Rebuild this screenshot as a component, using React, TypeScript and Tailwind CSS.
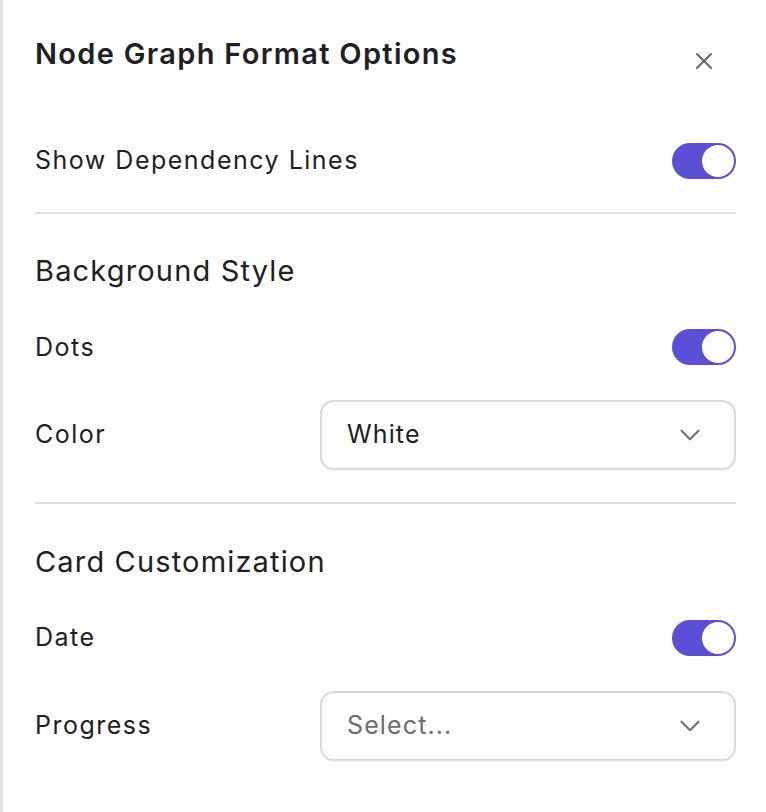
import { X, ChevronDown } from "lucide-react";

const Toggle = ({ on = true }: { on?: boolean }) => (
  <button
    className={`flex h-[36px] w-[64px] shrink-0 items-center rounded-full p-[2px] ${
      on ? "justify-end bg-[#5a4fd5]" : "justify-start bg-[#d4d4d8]"
    }`}
  >
    <span className="block size-[32px] rounded-full bg-white" />
  </button>
);

const SelectBox = ({ value, placeholder }: { value?: string; placeholder?: string }) => (
  <div className="flex h-[70px] w-[416px] items-center justify-between rounded-[14px] border-2 border-[#d9d9de] bg-white pl-[25px] pr-[27px] shadow-[0_1px_2px_rgba(0,0,0,0.06)]">
    <span className={`text-[25px] tracking-[0.045em] ${value ? "text-[#1f2023]" : "text-[#6b6b72]"}`}>
      {value || placeholder}
    </span>
    <ChevronDown className="size-[34px] text-[#737378]" strokeWidth={1.6} />
  </div>
);

const Row = ({ label, children, className = "" }: { label: string; children: React.ReactNode; className?: string }) => (
  <div className={`flex items-center justify-between ${className}`}>
    <span className="text-[25px] tracking-[0.06em] text-[#1f2023]">{label}</span>
    {children}
  </div>
);

export default function App() {
  return (
    <div
      className="h-[812px] w-[766px] border-l-[3px] border-[#e4e4e7] bg-white pl-[32px] pr-[30px] text-[#1f2023]"
      style={{ fontFamily: "Inter, 'Noto Sans', sans-serif" }}
    >
      <div className="flex items-center justify-between pt-[33px]">
        <h2 className="text-[29px] font-semibold leading-[40px] tracking-[0.045em]">Node Graph Format Options</h2>
        <X className="mr-[18px] mt-[14px] size-[28px] text-[#666]" strokeWidth={1.8} />
      </div>

      <Row label="Show Dependency Lines" className="pt-[67px]">
        <Toggle />
      </Row>

      <div className="mt-[32px] h-[2px] bg-[#dcdce0]" />

      <h3 className="mt-[37px] text-[29px] leading-[40px] tracking-[0.04em]">Background Style</h3>

      <Row label="Dots" className="mt-[38px]">
        <Toggle />
      </Row>

      <Row label="Color" className="mt-[34px]">
        <SelectBox value="White" />
      </Row>

      <div className="mt-[32px] h-[2px] bg-[#dcdce0]" />

      <h3 className="mt-[38px] text-[29px] leading-[40px] tracking-[0.04em]">Card Customization</h3>

      <Row label="Date" className="mt-[37px]">
        <Toggle />
      </Row>

      <Row label="Progress" className="mt-[34px]">
        <SelectBox placeholder="Select..." />
      </Row>
    </div>
  );
}
